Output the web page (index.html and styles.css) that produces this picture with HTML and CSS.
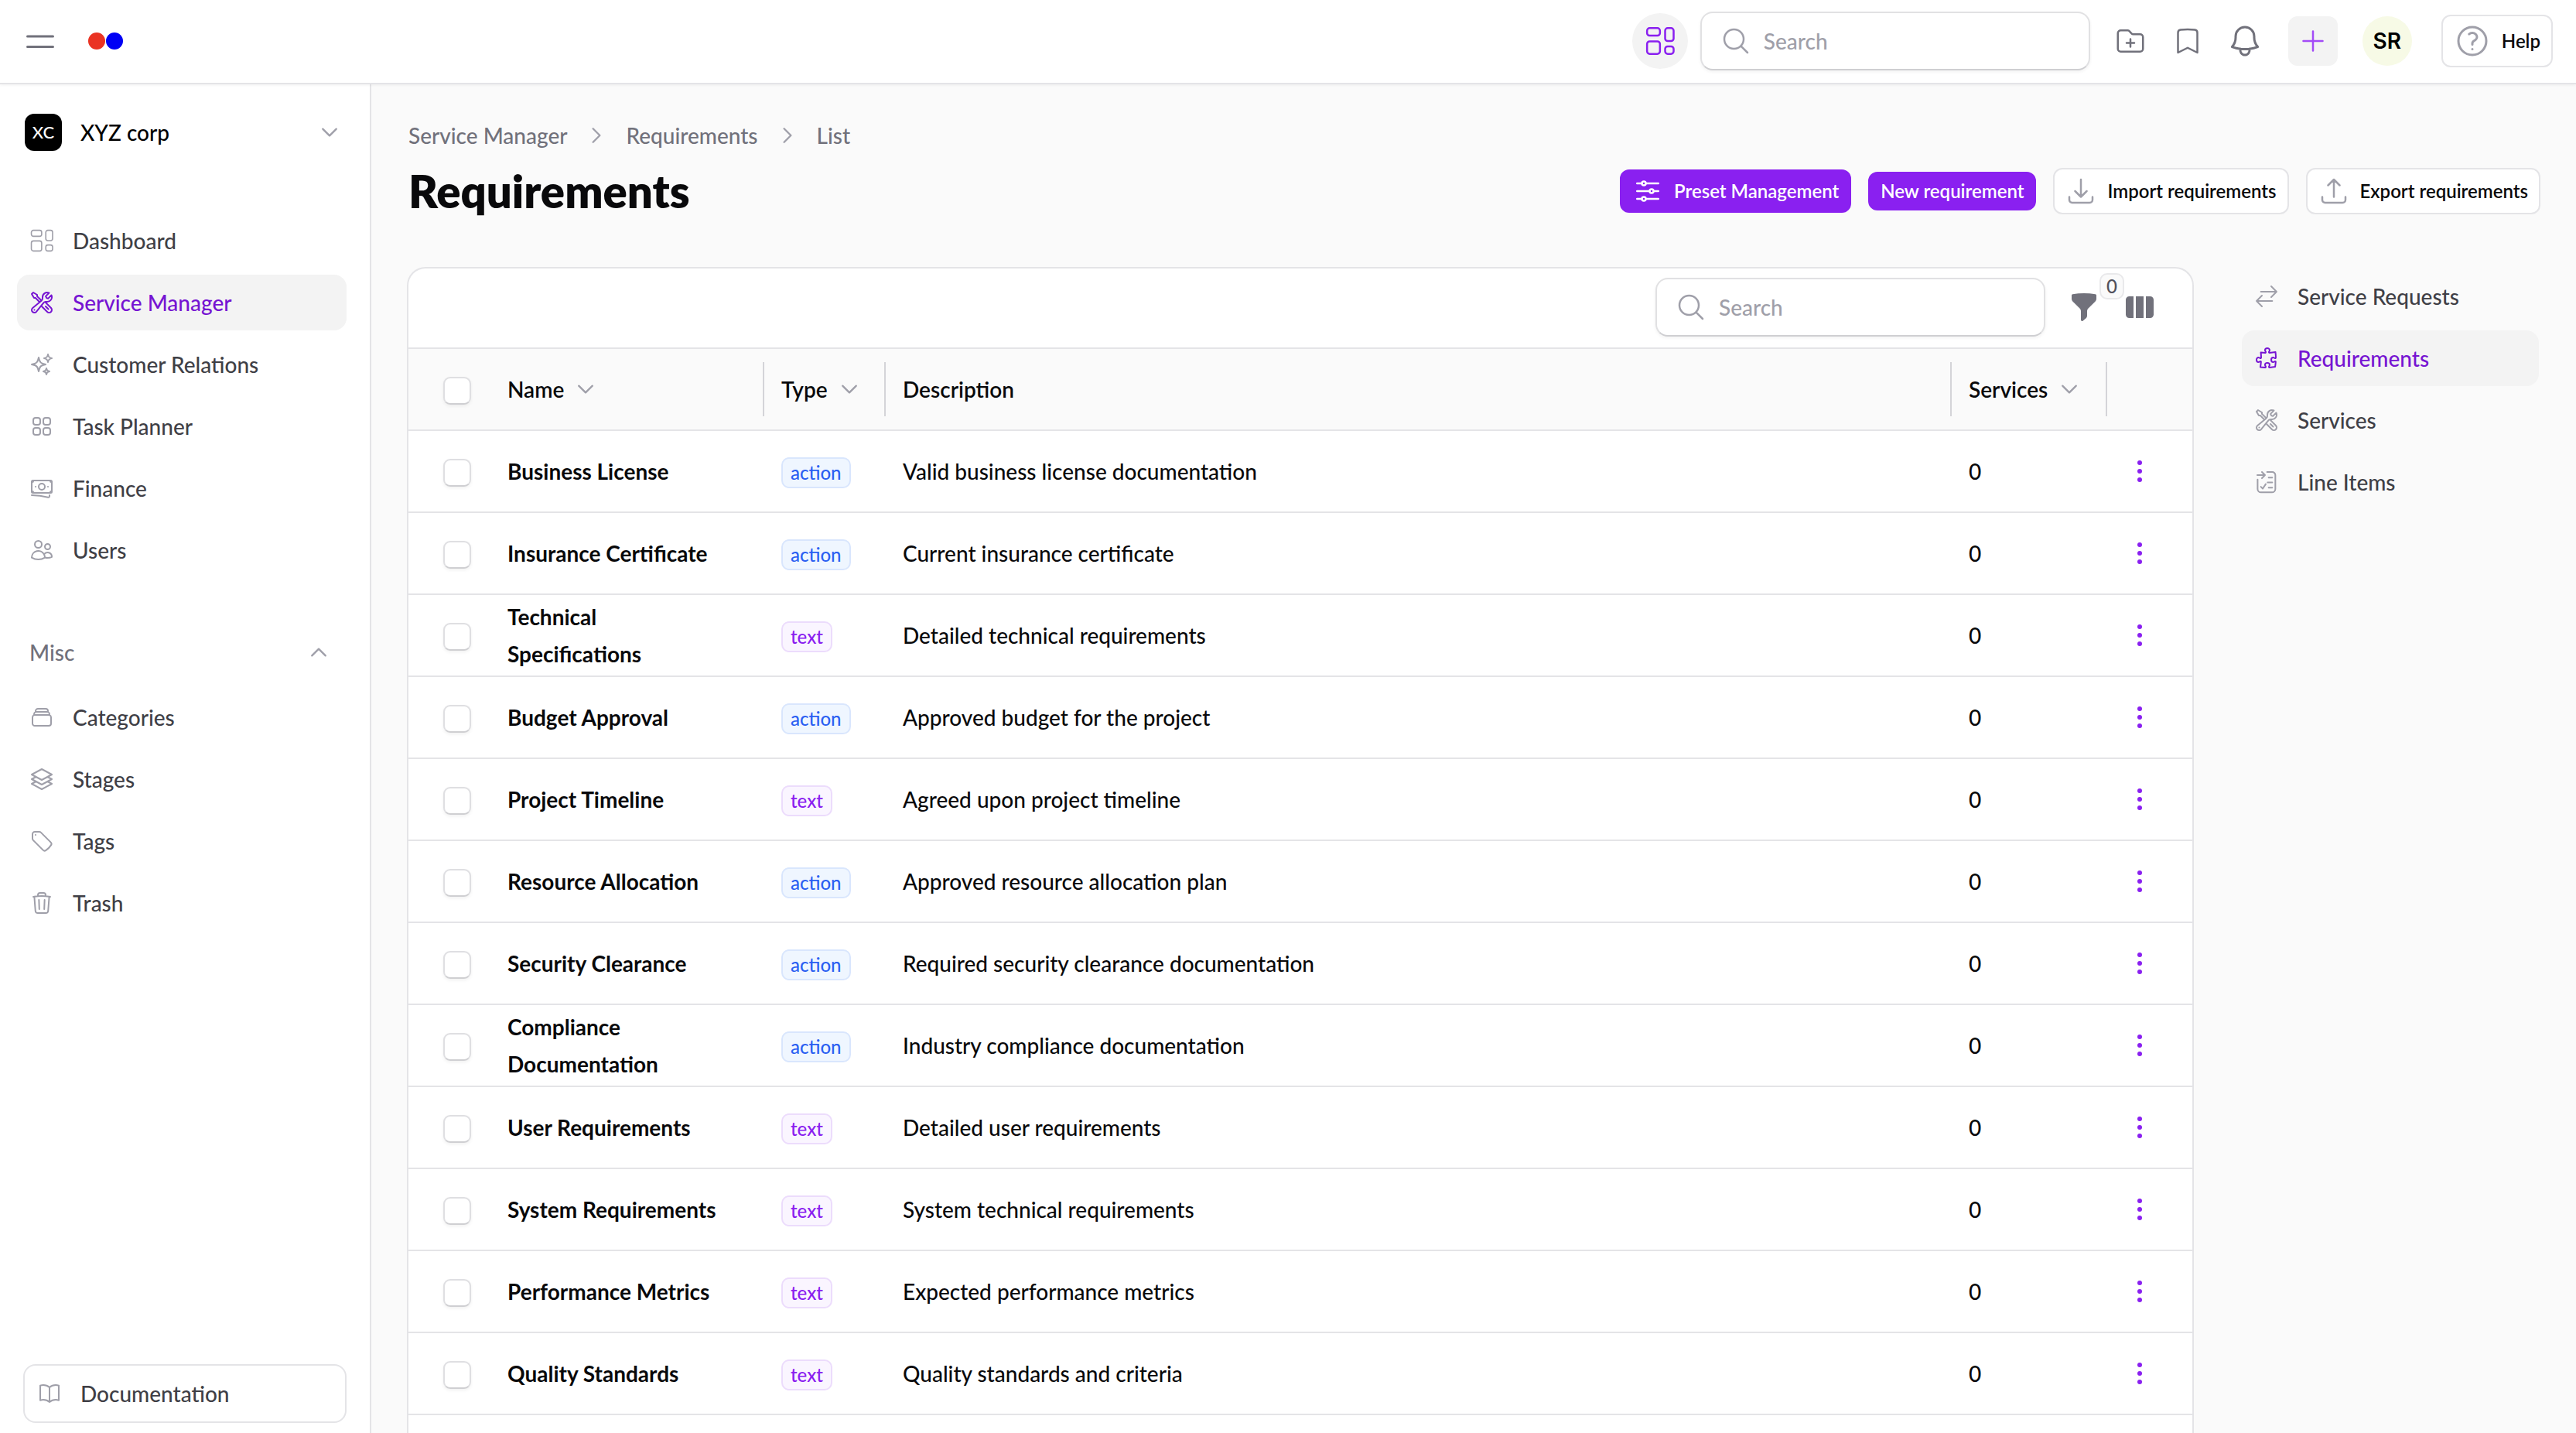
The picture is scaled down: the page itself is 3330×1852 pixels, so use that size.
FILE: index.html
```html
<!DOCTYPE html>
<html lang="en">
<head>
  <meta charset="utf-8">
  <title>Requirements</title>
  <link rel="stylesheet" href="styles.css">
</head>
<body>
  <!-- Icon set -->
  <svg class="sprite" aria-hidden="true">
    <symbol id="i-menu" viewBox="0 0 24 24"><path d="M3.75 9h16.5m-16.5 6.75h16.5"/></symbol>
    <symbol id="i-down" viewBox="0 0 24 24"><path d="m19.5 8.25-7.5 7.5-7.5-7.5"/></symbol>
    <symbol id="i-up" viewBox="0 0 24 24"><path d="m4.5 15.75 7.5-7.5 7.5 7.5"/></symbol>
    <symbol id="i-right" viewBox="0 0 24 24"><path d="m8.25 4.5 7.5 7.5-7.5 7.5"/></symbol>
    <symbol id="i-dashboard" viewBox="0 0 24 24"><rect x="1.9" y="2" width="10" height="5.8" rx="2"/><rect x="1.9" y="12.3" width="10" height="9.7" rx="2"/><rect x="15.9" y="2" width="6.6" height="10" rx="2"/><rect x="15.9" y="16.2" width="6.6" height="5.8" rx="2"/></symbol>
    <symbol id="i-tools" viewBox="0 0 24 24"><path d="M11.42 15.17 17.25 21A2.652 2.652 0 0 0 21 17.25l-5.877-5.877M11.42 15.17l2.496-3.03c.317-.384.74-.626 1.208-.766M11.42 15.17l-4.655 5.653a2.548 2.548 0 1 1-3.586-3.586l6.837-5.63m5.108-.233c.55-.164 1.163-.188 1.743-.14a4.5 4.5 0 0 0 4.486-6.336l-3.276 3.277a3.004 3.004 0 0 1-2.25-2.25l3.276-3.276a4.5 4.5 0 0 0-6.336 4.486c.091 1.076-.071 2.264-.904 2.95l-.102.085m-1.745 1.437L5.909 7.5H4.5L2.25 3.75l1.5-1.5L7.5 4.5v1.409l4.26 4.26m-1.745 1.437 1.745-1.437m6.615 8.206L15.75 15.75M4.867 19.125h.008v.008h-.008v-.008Z"/></symbol>
    <symbol id="i-sparkles" viewBox="0 0 24 24"><path d="M9.813 15.904 9 18.75l-.813-2.846a4.5 4.5 0 0 0-3.09-3.09L2.25 12l2.846-.813a4.5 4.5 0 0 0 3.09-3.09L9 5.25l.813 2.846a4.5 4.5 0 0 0 3.09 3.09L15.75 12l-2.846.813a4.5 4.5 0 0 0-3.09 3.09ZM18.259 8.715 18 9.75l-.259-1.035a3.375 3.375 0 0 0-2.455-2.456L14.25 6l1.036-.259a3.375 3.375 0 0 0 2.455-2.456L18 2.25l.259 1.035a3.375 3.375 0 0 0 2.456 2.456L21.75 6l-1.035.259a3.375 3.375 0 0 0-2.456 2.456ZM16.894 20.567 16.5 21.75l-.394-1.183a2.25 2.25 0 0 0-1.423-1.423L13.5 18.75l1.183-.394a2.25 2.25 0 0 0 1.423-1.423l.394-1.183.394 1.183a2.25 2.25 0 0 0 1.423 1.423l1.183.394-1.183.394a2.25 2.25 0 0 0-1.423 1.423Z"/></symbol>
    <symbol id="i-squares" viewBox="0 0 24 24"><rect x="3.75" y="3.75" width="6.75" height="6.75" rx="2.25"/><rect x="13.5" y="3.75" width="6.75" height="6.75" rx="2.25"/><rect x="3.75" y="13.5" width="6.75" height="6.75" rx="2.25"/><rect x="13.5" y="13.5" width="6.75" height="6.75" rx="2.25"/></symbol>
    <symbol id="i-banknotes" viewBox="0 0 24 24"><path d="M2.25 18.75a60.07 60.07 0 0 1 15.797 2.101c.727.198 1.453-.342 1.453-1.096V18.75M3.75 4.5v.75A.75.75 0 0 1 3 6h-.75m0 0v-.375c0-.621.504-1.125 1.125-1.125H20.25M2.25 6v9m18-10.5v.75c0 .414.336.75.75.75h.75m-1.5-1.5h.375c.621 0 1.125.504 1.125 1.125v9.75c0 .621-.504 1.125-1.125 1.125h-.375m1.5-1.5H21a.75.75 0 0 0-.75.75v.75m0 0H3.75m0 0h-.375a1.125 1.125 0 0 1-1.125-1.125V15m1.5 1.5v-.75A.75.75 0 0 0 3 15h-.75M15 10.5a3 3 0 1 1-6 0 3 3 0 0 1 6 0Zm3 0h.008v.008H18V10.5Zm-12 0h.008v.008H6V10.5Z"/></symbol>
    <symbol id="i-users" viewBox="0 0 24 24"><path d="M15 19.128a9.38 9.38 0 0 0 2.625.372 9.337 9.337 0 0 0 4.121-.952 4.125 4.125 0 0 0-7.533-2.493M15 19.128v-.003c0-1.113-.285-2.16-.786-3.07M15 19.128v.106A12.318 12.318 0 0 1 8.624 21c-2.331 0-4.512-.645-6.374-1.766l-.001-.109a6.375 6.375 0 0 1 11.964-3.07M12 6.375a3.375 3.375 0 1 1-6.75 0 3.375 3.375 0 0 1 6.75 0Zm8.25 2.25a2.625 2.625 0 1 1-5.25 0 2.625 2.625 0 0 1 5.25 0Z"/></symbol>
    <symbol id="i-stack" viewBox="0 0 24 24"><path d="M6 6.878V6a2.25 2.25 0 0 1 2.25-2.25h7.5A2.25 2.25 0 0 1 18 6v.878m-12 0c.235-.083.487-.128.75-.128h10.5c.263 0 .515.045.75.128m-12 0A2.25 2.25 0 0 0 4.5 9v.878m13.5-3A2.25 2.25 0 0 1 19.5 9v.878m0 0a2.246 2.246 0 0 0-.75-.128H5.25c-.263 0-.515.045-.75.128m15 0A2.25 2.25 0 0 1 21 12v6a2.25 2.25 0 0 1-2.25 2.25H5.25A2.25 2.25 0 0 1 3 18v-6c0-.98.626-1.813 1.5-2.122"/></symbol>
    <symbol id="i-layers" viewBox="0 0 24 24"><path d="M6.429 9.75 2.25 12l4.179 2.25m0-4.5 5.571 3 5.571-3m-11.142 0L2.25 7.5 12 2.25l9.75 5.25-4.179 2.25m0 0L21.75 12l-4.179 2.25m0 0 4.179 2.25L12 21.75 2.25 16.5l4.179-2.25m11.142 0-5.571 3-5.571-3"/></symbol>
    <symbol id="i-tag" viewBox="0 0 24 24"><path d="M9.568 3H5.25A2.25 2.25 0 0 0 3 5.25v4.318c0 .597.237 1.17.659 1.591l9.581 9.581c.699.699 1.78.872 2.607.33a18.095 18.095 0 0 0 5.223-5.223c.542-.827.369-1.908-.33-2.607L11.16 3.66A2.25 2.25 0 0 0 9.568 3ZM6 6h.008v.008H6V6Z"/></symbol>
    <symbol id="i-trash" viewBox="0 0 24 24"><path d="m14.74 9-.346 9m-4.788 0L9.26 9m9.968-3.21c.342.052.682.107 1.022.166m-1.022-.165L18.16 19.673a2.25 2.25 0 0 1-2.244 2.077H8.084a2.25 2.25 0 0 1-2.244-2.077L4.772 5.79m14.456 0a48.108 48.108 0 0 0-3.478-.397m-12 .562c.34-.059.68-.114 1.022-.165m0 0a48.11 48.11 0 0 1 3.478-.397m7.5 0v-.916c0-1.18-.91-2.164-2.09-2.201a51.964 51.964 0 0 0-3.32 0c-1.18.037-2.09 1.022-2.09 2.201v.916m7.5 0a48.667 48.667 0 0 0-7.5 0"/></symbol>
    <symbol id="i-book" viewBox="0 0 24 24"><path d="M12 6.042A8.967 8.967 0 0 0 6 3.75c-1.052 0-2.062.18-3 .512v14.25A8.987 8.987 0 0 1 6 18c2.305 0 4.408.867 6 2.292m0-14.25a8.966 8.966 0 0 1 6-2.292c1.052 0 2.062.18 3 .512v14.25A8.987 8.987 0 0 0 18 18a8.967 8.967 0 0 0-6 2.292m0-14.25v14.25"/></symbol>
    <symbol id="i-search" viewBox="0 0 24 24"><path d="m21 21-5.197-5.197m0 0A7.5 7.5 0 1 0 5.196 5.196a7.5 7.5 0 0 0 10.607 10.607Z"/></symbol>
    <symbol id="i-folder" viewBox="0 0 24 24"><path d="M12 10.5v6m3-3H9m4.06-7.19-2.12-2.12a1.5 1.5 0 0 0-1.061-.44H4.5A2.25 2.25 0 0 0 2.25 6v12a2.25 2.25 0 0 0 2.25 2.25h15A2.25 2.25 0 0 0 21.75 18V9a2.25 2.25 0 0 0-2.25-2.25h-5.379a1.5 1.5 0 0 1-1.06-.44Z"/></symbol>
    <symbol id="i-bookmark" viewBox="0 0 24 24"><path d="M17.593 3.322c1.1.128 1.907 1.077 1.907 2.185V21L12 17.25 4.5 21V5.507c0-1.108.806-2.057 1.907-2.185a48.507 48.507 0 0 1 11.186 0Z"/></symbol>
    <symbol id="i-bell" viewBox="0 0 24 24"><path d="M14.857 17.082a23.848 23.848 0 0 0 5.454-1.31A8.967 8.967 0 0 1 18 9.75V9A6 6 0 0 0 6 9v.75a8.967 8.967 0 0 1-2.312 6.022c1.733.64 3.56 1.085 5.455 1.31m5.714 0a24.255 24.255 0 0 1-5.714 0m5.714 0a3 3 0 1 1-5.714 0"/></symbol>
    <symbol id="i-plus" viewBox="0 0 24 24"><path d="M12 4.5v15m7.5-7.5h-15"/></symbol>
    <symbol id="i-help" viewBox="0 0 24 24"><path d="M9.879 7.519c1.171-1.025 3.071-1.025 4.242 0 1.172 1.025 1.172 2.687 0 3.712-.203.179-.43.326-.67.442-.745.361-1.45.999-1.45 1.827v.75M21 12a9 9 0 1 1-18 0 9 9 0 0 1 18 0Zm-9 5.25h.008v.008H12v-.008Z"/></symbol>
    <symbol id="i-sliders" viewBox="0 0 24 24"><path d="M10.5 6h9.75M10.5 6a1.5 1.5 0 1 1-3 0m3 0a1.5 1.5 0 1 0-3 0M3.75 6H7.5m3 12h9.75m-9.75 0a1.5 1.5 0 0 1-3 0m3 0a1.5 1.5 0 0 0-3 0m-3.75 0H7.5m9-6h3.75m-3.75 0a1.5 1.5 0 0 1-3 0m3 0a1.5 1.5 0 0 0-3 0m-9.75 0h9.75"/></symbol>
    <symbol id="i-import" viewBox="0 0 24 24"><path d="M3 16.5v2.25A2.25 2.25 0 0 0 5.25 21h13.5A2.25 2.25 0 0 0 21 18.75V16.5M16.5 12 12 16.5m0 0L7.5 12m4.5 4.5V3"/></symbol>
    <symbol id="i-export" viewBox="0 0 24 24"><path d="M3 16.5v2.25A2.25 2.25 0 0 0 5.25 21h13.5A2.25 2.25 0 0 0 21 18.75V16.5m-13.5-9L12 3m0 0 4.5 4.5M12 3v13.5"/></symbol>
    <symbol id="i-funnel" viewBox="0 0 20 20"><path d="M2.628 1.601C5.028 1.206 7.49 1 10 1s4.973.206 7.372.601a.75.75 0 0 1 .628.74v2.288a2.25 2.25 0 0 1-.659 1.59l-4.682 4.683a2.25 2.25 0 0 0-.659 1.59v3.037c0 .684-.31 1.33-.844 1.757l-1.937 1.55A.75.75 0 0 1 8 18.25v-5.757a2.25 2.25 0 0 0-.659-1.591L2.659 6.22A2.25 2.25 0 0 1 2 4.629V2.34a.75.75 0 0 1 .628-.74Z"/></symbol>
    <symbol id="i-columns" viewBox="0 0 20 20"><path d="M14 17h2.75A2.25 2.25 0 0 0 19 14.75v-9.5A2.25 2.25 0 0 0 16.75 3H14v14ZM12.5 3h-5v14h5V3ZM3.25 3H6v14H3.25A2.25 2.25 0 0 1 1 14.75v-9.5A2.25 2.25 0 0 1 3.25 3Z"/></symbol>
    <symbol id="i-dots" viewBox="0 0 40 40"><circle cx="20" cy="9" r="3"/><circle cx="20" cy="20" r="3"/><circle cx="20" cy="31" r="3"/></symbol>
    <symbol id="i-swap" viewBox="0 0 24 24"><path d="M6.5 7.5h15.2m-5.2-5.2 5.2 5.2-5.2 5.2M17.5 16.5H2.3m5.2-5.2-5.2 5.2 5.2 5.2"/></symbol>
    <symbol id="i-puzzle" viewBox="0 0 24 24"><path d="M14.25 6.087c0-.355.186-.676.401-.959.221-.29.349-.634.349-1.003 0-1.036-1.007-1.875-2.25-1.875s-2.25.84-2.25 1.875c0 .369.128.713.349 1.003.215.283.401.604.401.959v0a.64.64 0 0 1-.657.643 48.39 48.39 0 0 1-4.163-.3c.186 1.613.293 3.25.315 4.907a.656.656 0 0 1-.658.663v0c-.355 0-.676-.186-.959-.401a1.647 1.647 0 0 0-1.003-.349c-1.036 0-1.875 1.007-1.875 2.25s.84 2.25 1.875 2.25c.369 0 .713-.128 1.003-.349.283-.215.604-.401.959-.401v0c.31 0 .555.26.532.57a48.039 48.039 0 0 1-.642 5.056c1.518.19 3.058.309 4.616.354a.64.64 0 0 0 .657-.643v0c0-.355-.186-.676-.401-.959a1.647 1.647 0 0 1-.349-1.003c0-1.035 1.008-1.875 2.25-1.875 1.243 0 2.25.84 2.25 1.875 0 .369-.128.713-.349 1.003-.215.283-.4.604-.4.959v0c0 .333.277.599.61.58a48.1 48.1 0 0 0 5.427-.63 48.05 48.05 0 0 0 .582-4.717.532.532 0 0 0-.533-.57v0c-.355 0-.676.186-.959.401-.29.221-.634.349-1.003.349-1.035 0-1.875-1.007-1.875-2.25s.84-2.25 1.875-2.25c.37 0 .713.128 1.003.349.283.215.604.401.96.401v0a.656.656 0 0 0 .658-.663 48.422 48.422 0 0 0-.37-5.36c-1.886.342-3.81.574-5.766.689a.578.578 0 0 1-.61-.58v0Z"/></symbol>
    <symbol id="i-lines" viewBox="0 0 24 24"><path d="M12.5 2.3h5a3 3 0 0 1 3 3v13.4a3.3 3.3 0 0 1-3.3 3.3H6.6a3.3 3.3 0 0 1-3.3-3.3V9.5M3 5.3h7.5m-3-3 3 3-3 3M14 7.6h3.5M13 12.4h4.5M14 17.4h3.5M6.5 16.6l1.8 1.8 2.9-4.4"/></symbol>
  </svg>

  <header class="topbar">
    <button class="icon-btn menu-btn" aria-label="Toggle menu"><svg class="icon icon-lg"><use href="#i-menu"/></svg></button>
    <a class="logo" href="#" aria-label="Home"><span class="dot dot-red"></span><span class="dot dot-blue"></span></a>
    <div class="topbar-tools">
      <button class="apps-btn" aria-label="Dashboard"><svg class="icon icon-md"><use href="#i-dashboard"/></svg></button>
      <label class="search">
        <svg class="icon icon-md"><use href="#i-search"/></svg>
        <input type="search" placeholder="Search" aria-label="Search everything">
      </label>
      <div class="quick-links">
        <button class="icon-btn" aria-label="New folder"><svg class="icon icon-md"><use href="#i-folder"/></svg></button>
        <button class="icon-btn" aria-label="Bookmarks"><svg class="icon icon-md"><use href="#i-bookmark"/></svg></button>
        <button class="icon-btn" aria-label="Notifications"><svg class="icon icon-lg"><use href="#i-bell"/></svg></button>
      </div>
      <button class="add-btn" aria-label="Add"><svg class="icon icon-md"><use href="#i-plus"/></svg></button>
      <button class="avatar">SR</button>
      <button class="btn help-btn"><svg class="icon icon-lg"><use href="#i-help"/></svg>Help</button>
    </div>
  </header>

  <div class="layout">
    <aside class="sidebar">
      <button class="workspace">
        <span class="workspace-logo">XC</span>
        <span class="workspace-name">XYZ corp</span>
        <svg class="icon icon-xs"><use href="#i-down"/></svg>
      </button>
      <nav class="nav">
        <a class="nav-item" href="#"><svg class="icon icon-sm thin"><use href="#i-dashboard"/></svg>Dashboard</a>
        <a class="nav-item active" href="#"><svg class="icon icon-sm"><use href="#i-tools"/></svg>Service Manager</a>
        <a class="nav-item" href="#"><svg class="icon icon-sm"><use href="#i-sparkles"/></svg>Customer Relations</a>
        <a class="nav-item" href="#"><svg class="icon icon-sm"><use href="#i-squares"/></svg>Task Planner</a>
        <a class="nav-item" href="#"><svg class="icon icon-sm"><use href="#i-banknotes"/></svg>Finance</a>
        <a class="nav-item" href="#"><svg class="icon icon-sm"><use href="#i-users"/></svg>Users</a>
      </nav>
      <button class="nav-heading">Misc <svg class="icon icon-xs"><use href="#i-up"/></svg></button>
      <nav class="nav">
        <a class="nav-item" href="#"><svg class="icon icon-sm"><use href="#i-stack"/></svg>Categories</a>
        <a class="nav-item" href="#"><svg class="icon icon-sm"><use href="#i-layers"/></svg>Stages</a>
        <a class="nav-item" href="#"><svg class="icon icon-sm"><use href="#i-tag"/></svg>Tags</a>
        <a class="nav-item" href="#"><svg class="icon icon-sm"><use href="#i-trash"/></svg>Trash</a>
      </nav>
      <a class="docs-link" href="#"><svg class="icon icon-sm"><use href="#i-book"/></svg>Documentation</a>
    </aside>

    <main class="main">
      <nav class="breadcrumb" aria-label="Breadcrumb">
        <a href="#">Service Manager</a>
        <svg class="icon icon-xs"><use href="#i-right"/></svg>
        <a href="#">Requirements</a>
        <svg class="icon icon-xs"><use href="#i-right"/></svg>
        <a href="#">List</a>
      </nav>
      <div class="page-head">
        <h1>Requirements</h1>
        <div class="actions">
          <button class="btn btn-primary"><svg class="icon icon-md"><use href="#i-sliders"/></svg>Preset Management</button>
          <button class="btn btn-primary btn-small">New requirement</button>
          <button class="btn"><svg class="icon icon-md"><use href="#i-import"/></svg>Import requirements</button>
          <button class="btn"><svg class="icon icon-md"><use href="#i-export"/></svg>Export requirements</button>
        </div>
      </div>

      <div class="content">
        <section class="card">
          <div class="toolbar">
            <label class="search">
              <svg class="icon icon-md"><use href="#i-search"/></svg>
              <input type="search" placeholder="Search" aria-label="Search requirements">
            </label>
            <button class="icon-btn filter-btn" aria-label="Filter"><svg class="icon icon-md solid"><use href="#i-funnel"/></svg><span class="count">0</span></button>
            <button class="icon-btn" aria-label="Columns"><svg class="icon icon-md solid"><use href="#i-columns"/></svg></button>
          </div>
          <table class="table">
            <thead>
              <tr>
                <th class="col-check"><input type="checkbox" aria-label="Select all"></th>
                <th class="col-name"><button class="sort">Name <svg class="icon icon-xs"><use href="#i-down"/></svg></button></th>
                <th class="col-type"><button class="sort">Type <svg class="icon icon-xs"><use href="#i-down"/></svg></button></th>
                <th class="col-desc"><span class="sort">Description</span></th>
                <th class="col-services"><button class="sort">Services <svg class="icon icon-xs"><use href="#i-down"/></svg></button></th>
                <th class="col-menu"></th>
              </tr>
            </thead>
            <tbody>
              <tr>
                <td><input type="checkbox" aria-label="Select Business License"></td>
                <td class="name">Business License</td>
                <td><span class="badge badge-action">action</span></td>
                <td>Valid business license documentation</td>
                <td>0</td>
                <td><button class="row-menu" aria-label="Row actions"><svg class="icon icon-md solid"><use href="#i-dots"/></svg></button></td>
              </tr>
              <tr>
                <td><input type="checkbox" aria-label="Select Insurance Certificate"></td>
                <td class="name">Insurance Certificate</td>
                <td><span class="badge badge-action">action</span></td>
                <td>Current insurance certificate</td>
                <td>0</td>
                <td><button class="row-menu" aria-label="Row actions"><svg class="icon icon-md solid"><use href="#i-dots"/></svg></button></td>
              </tr>
              <tr>
                <td><input type="checkbox" aria-label="Select Technical Specifications"></td>
                <td class="name">Technical Specifications</td>
                <td><span class="badge badge-text">text</span></td>
                <td>Detailed technical requirements</td>
                <td>0</td>
                <td><button class="row-menu" aria-label="Row actions"><svg class="icon icon-md solid"><use href="#i-dots"/></svg></button></td>
              </tr>
              <tr>
                <td><input type="checkbox" aria-label="Select Budget Approval"></td>
                <td class="name">Budget Approval</td>
                <td><span class="badge badge-action">action</span></td>
                <td>Approved budget for the project</td>
                <td>0</td>
                <td><button class="row-menu" aria-label="Row actions"><svg class="icon icon-md solid"><use href="#i-dots"/></svg></button></td>
              </tr>
              <tr>
                <td><input type="checkbox" aria-label="Select Project Timeline"></td>
                <td class="name">Project Timeline</td>
                <td><span class="badge badge-text">text</span></td>
                <td>Agreed upon project timeline</td>
                <td>0</td>
                <td><button class="row-menu" aria-label="Row actions"><svg class="icon icon-md solid"><use href="#i-dots"/></svg></button></td>
              </tr>
              <tr>
                <td><input type="checkbox" aria-label="Select Resource Allocation"></td>
                <td class="name">Resource Allocation</td>
                <td><span class="badge badge-action">action</span></td>
                <td>Approved resource allocation plan</td>
                <td>0</td>
                <td><button class="row-menu" aria-label="Row actions"><svg class="icon icon-md solid"><use href="#i-dots"/></svg></button></td>
              </tr>
              <tr>
                <td><input type="checkbox" aria-label="Select Security Clearance"></td>
                <td class="name">Security Clearance</td>
                <td><span class="badge badge-action">action</span></td>
                <td>Required security clearance documentation</td>
                <td>0</td>
                <td><button class="row-menu" aria-label="Row actions"><svg class="icon icon-md solid"><use href="#i-dots"/></svg></button></td>
              </tr>
              <tr>
                <td><input type="checkbox" aria-label="Select Compliance Documentation"></td>
                <td class="name">Compliance Documentation</td>
                <td><span class="badge badge-action">action</span></td>
                <td>Industry compliance documentation</td>
                <td>0</td>
                <td><button class="row-menu" aria-label="Row actions"><svg class="icon icon-md solid"><use href="#i-dots"/></svg></button></td>
              </tr>
              <tr>
                <td><input type="checkbox" aria-label="Select User Requirements"></td>
                <td class="name">User Requirements</td>
                <td><span class="badge badge-text">text</span></td>
                <td>Detailed user requirements</td>
                <td>0</td>
                <td><button class="row-menu" aria-label="Row actions"><svg class="icon icon-md solid"><use href="#i-dots"/></svg></button></td>
              </tr>
              <tr>
                <td><input type="checkbox" aria-label="Select System Requirements"></td>
                <td class="name">System Requirements</td>
                <td><span class="badge badge-text">text</span></td>
                <td>System technical requirements</td>
                <td>0</td>
                <td><button class="row-menu" aria-label="Row actions"><svg class="icon icon-md solid"><use href="#i-dots"/></svg></button></td>
              </tr>
              <tr>
                <td><input type="checkbox" aria-label="Select Performance Metrics"></td>
                <td class="name">Performance Metrics</td>
                <td><span class="badge badge-text">text</span></td>
                <td>Expected performance metrics</td>
                <td>0</td>
                <td><button class="row-menu" aria-label="Row actions"><svg class="icon icon-md solid"><use href="#i-dots"/></svg></button></td>
              </tr>
              <tr>
                <td><input type="checkbox" aria-label="Select Quality Standards"></td>
                <td class="name">Quality Standards</td>
                <td><span class="badge badge-text">text</span></td>
                <td>Quality standards and criteria</td>
                <td>0</td>
                <td><button class="row-menu" aria-label="Row actions"><svg class="icon icon-md solid"><use href="#i-dots"/></svg></button></td>
              </tr>
            </tbody>
          </table>
        </section>

        <nav class="nav subnav" aria-label="Service Manager">
          <a class="nav-item" href="#"><svg class="icon icon-sm"><use href="#i-swap"/></svg>Service Requests</a>
          <a class="nav-item active" href="#"><svg class="icon icon-sm"><use href="#i-puzzle"/></svg>Requirements</a>
          <a class="nav-item" href="#"><svg class="icon icon-sm"><use href="#i-tools"/></svg>Services</a>
          <a class="nav-item" href="#"><svg class="icon icon-sm"><use href="#i-lines"/></svg>Line Items</a>
        </nav>
      </div>
    </main>
  </div>
</body>
</html>
```
FILE: styles.css
```css
* {
  box-sizing: border-box;
}
body {
  margin: 0;
  height: 100vh;
  display: flex;
  flex-direction: column;
  overflow: hidden;
  background-color: #fafafa;
  color: #09090b;
  font-family: Lato, "Open Sans", sans-serif;
  font-size: 28px;
  font-weight: 500;
  line-height: 40px;
}
a {
  color: inherit;
  text-decoration: none;
}
button {
  padding: 0;
  border: 0;
  background: none;
  color: inherit;
  font: inherit;
  cursor: pointer;
}

/* Icons */
.sprite {
  display: none;
}
.icon {
  flex: none;
  width: 32px;
  height: 32px;
  fill: none;
  stroke: currentColor;
  stroke-width: 1.5;
  stroke-linecap: round;
  stroke-linejoin: round;
  color: #9f9fa9;
}
.icon.solid {
  fill: currentColor;
  stroke: none;
}
.icon.thin {
  stroke-width: 1.2;
}
.icon-xs {
  width: 28px;
  height: 28px;
  stroke-width: 2;
}
.icon-md {
  width: 40px;
  height: 40px;
}
.icon-lg {
  width: 48px;
  height: 48px;
}
.icon-btn {
  display: flex;
  align-items: center;
  justify-content: center;
  width: 72px;
  height: 72px;
}
.icon-btn .icon {
  color: #71717b;
}

/* Top bar */
.topbar {
  position: relative;
  z-index: 1;
  flex: none;
  display: flex;
  align-items: center;
  height: 109px;
  padding: 0 30px 2px 16px;
  background-color: #fff;
  border-bottom: 2px solid #e4e4e7;
  box-shadow: 0 1px 4px rgba(0, 0, 0, 0.06);
}
.logo {
  display: flex;
  gap: 1px;
  margin-left: 26px;
}
.dot {
  width: 22px;
  height: 22px;
  border-radius: 50%;
}
.dot-red {
  background-color: #ea3323;
}
.dot-blue {
  background-color: #0000f5;
}
.topbar-tools {
  display: flex;
  align-items: center;
  gap: 16px;
  margin-left: auto;
}
.apps-btn,
.add-btn {
  display: flex;
  align-items: center;
  justify-content: center;
  background-color: #f3f3f3;
}
.apps-btn {
  width: 72px;
  height: 72px;
  border-radius: 50%;
}
.apps-btn .icon {
  color: #8a20f0;
}
.quick-links {
  display: flex;
  gap: 2px;
  margin-right: 4px;
}
.add-btn {
  width: 64px;
  height: 64px;
  border-radius: 12px;
}
.add-btn .icon {
  color: #a34bf7;
}
.avatar {
  width: 64px;
  height: 64px;
  margin-left: 16px;
  border-radius: 50%;
  background-color: #f7fae6;
  color: #000;
  font-family: Inter, sans-serif;
  font-weight: 600;
}
.search {
  display: flex;
  align-items: center;
  gap: 16px;
  width: 504px;
  height: 76px;
  padding: 0 24px;
  background-color: #fff;
  border: 2px solid #e1e1e3;
  border-bottom-color: #cfcfd2;
  border-radius: 16px;
  box-shadow: 0 2px 4px rgba(0, 0, 0, 0.05);
}
.search input {
  flex: 1;
  min-width: 0;
  padding: 0;
  border: 0;
  outline: 0;
  background: none;
  font: inherit;
}
.search input::placeholder {
  color: #9f9fa9;
}

/* Buttons */
.btn {
  display: flex;
  align-items: center;
  gap: 14px;
  height: 60px;
  padding: 0 14px;
  background-color: #fff;
  border: 2px solid #e4e4e7;
  border-radius: 12px;
  font-size: 24px;
  font-weight: 600;
  white-space: nowrap;
}
.btn-primary {
  height: 56px;
  background-color: #8a20f0;
  border-color: #8a20f0;
  color: #fff;
}
.btn-primary .icon {
  color: #fff;
}
.btn-small {
  height: 50px;
}
.help-btn {
  height: 68px;
  margin-left: 22px;
}

/* Layout */
.layout {
  flex: 1;
  min-height: 0;
  display: flex;
}
.sidebar {
  flex: none;
  display: flex;
  flex-direction: column;
  width: 480px;
  padding: 38px 30px 13px 22px;
  background-color: #fff;
  border-right: 2px solid #e4e4e7;
}
.workspace {
  display: flex;
  align-items: center;
  gap: 24px;
  height: 48px;
  margin-bottom: 80px;
  padding: 0 8px 0 10px;
  color: #000;
}
.workspace .icon {
  margin-left: auto;
}
.workspace-logo {
  width: 48px;
  height: 48px;
  border-radius: 12px;
  background-color: #000;
  color: #fff;
  font-size: 22px;
  line-height: 48px;
}
.nav {
  display: flex;
  flex-direction: column;
  gap: 8px;
}
.nav-item {
  display: flex;
  align-items: center;
  gap: 24px;
  height: 72px;
  padding: 0 16px;
  border-radius: 16px;
  color: #3f3f46;
}
.nav-item.active {
  background-color: #f3f3f3;
  color: #7614d2;
}
.nav-item.active .icon {
  color: inherit;
}
.nav-heading {
  display: flex;
  align-items: center;
  justify-content: space-between;
  margin: 76px 0 28px;
  padding: 0 22px 0 16px;
  color: #71717b;
}
.docs-link {
  display: flex;
  align-items: center;
  gap: 24px;
  height: 76px;
  margin: auto 0 0 8px;
  padding: 0 16px;
  border: 2px solid #e4e4e7;
  border-radius: 16px;
  color: #3f3f46;
}
.main {
  flex: 1;
  min-width: 0;
  display: flex;
  flex-direction: column;
  padding: 46px 46px 0;
}
.breadcrumb {
  display: flex;
  align-items: center;
  gap: 24px;
  padding-left: 2px;
  color: #71717b;
}
.page-head {
  display: flex;
  align-items: center;
  justify-content: space-between;
  margin: 22px 0 68px;
  padding-left: 2px;
}
h1 {
  margin: 0;
  font-size: 58px;
  font-weight: 800;
  line-height: 60px;
}
.actions {
  display: flex;
  align-items: center;
  gap: 22px;
}
.content {
  flex: 1;
  min-height: 0;
  display: flex;
  gap: 62px;
}
.subnav {
  flex: none;
  width: 386px;
  padding: 2px 2px 0 0;
}

/* Table card */
.card {
  flex: 1;
  min-width: 0;
  overflow: hidden;
  background-color: #fff;
  border: 2px solid #e4e4e7;
  border-bottom: 0;
  border-radius: 24px 24px 0 0;
}
.toolbar {
  display: flex;
  align-items: center;
  justify-content: flex-end;
  height: 104px;
  padding: 0 32px 2px 0;
  border-bottom: 2px solid #e4e4e7;
}
.toolbar .search {
  margin-right: 14px;
}
.filter-btn {
  position: relative;
}
.count {
  position: absolute;
  top: -8px;
  right: -16px;
  min-width: 32px;
  height: 34px;
  border: 2px solid #e9e9eb;
  border-radius: 10px;
  background-color: #fafafa;
  color: #52525c;
  font-size: 24px;
  line-height: 30px;
}
.table {
  width: 100%;
  table-layout: fixed;
  border-spacing: 0;
}
.table th,
.table td {
  height: 106px;
  padding: 0 0 0 22px;
  border-bottom: 2px solid #e4e4e7;
  text-align: left;
}
.table th {
  background-color: #fafafa;
  font-weight: 600;
}
.table .col-check {
  width: 106px;
}
.table .col-name {
  width: 354px;
}
.table .col-type {
  width: 157px;
}
.table .col-services {
  width: 201px;
}
.table .col-menu {
  width: 110px;
}
.table .name {
  padding-right: 40px;
  font-weight: 700;
  line-height: 48px;
}
.sort {
  display: flex;
  align-items: center;
  gap: 14px;
  width: 100%;
  height: 70px;
  border-right: 2px solid #d4d4d8;
}
.table td:first-child,
.table .col-check {
  padding-left: 45px;
}
input[type="checkbox"] {
  appearance: none;
  display: block;
  width: 36px;
  height: 36px;
  margin: 4px 0 0;
  background-color: #fff;
  border: 2px solid #dfdfe2;
  border-bottom-color: #cfcfd2;
  border-radius: 9px;
  box-shadow: 0 2px 4px rgba(0, 0, 0, 0.06);
}
.badge {
  display: block;
  width: fit-content;
  height: 40px;
  margin-top: 4px;
  padding: 0 10px;
  border: 2px solid;
  border-radius: 10px;
  font-size: 24px;
  line-height: 35px;
}
.badge-action {
  background-color: #eff6ff;
  border-color: #d9e6fd;
  color: #2b5ff2;
}
.badge-text {
  background-color: #faf5ff;
  border-color: #ecdcfc;
  color: #8a20f0;
}
.row-menu {
  display: block;
  width: 40px;
  height: 40px;
}
.row-menu .icon {
  color: #8a20f0;
}
```
